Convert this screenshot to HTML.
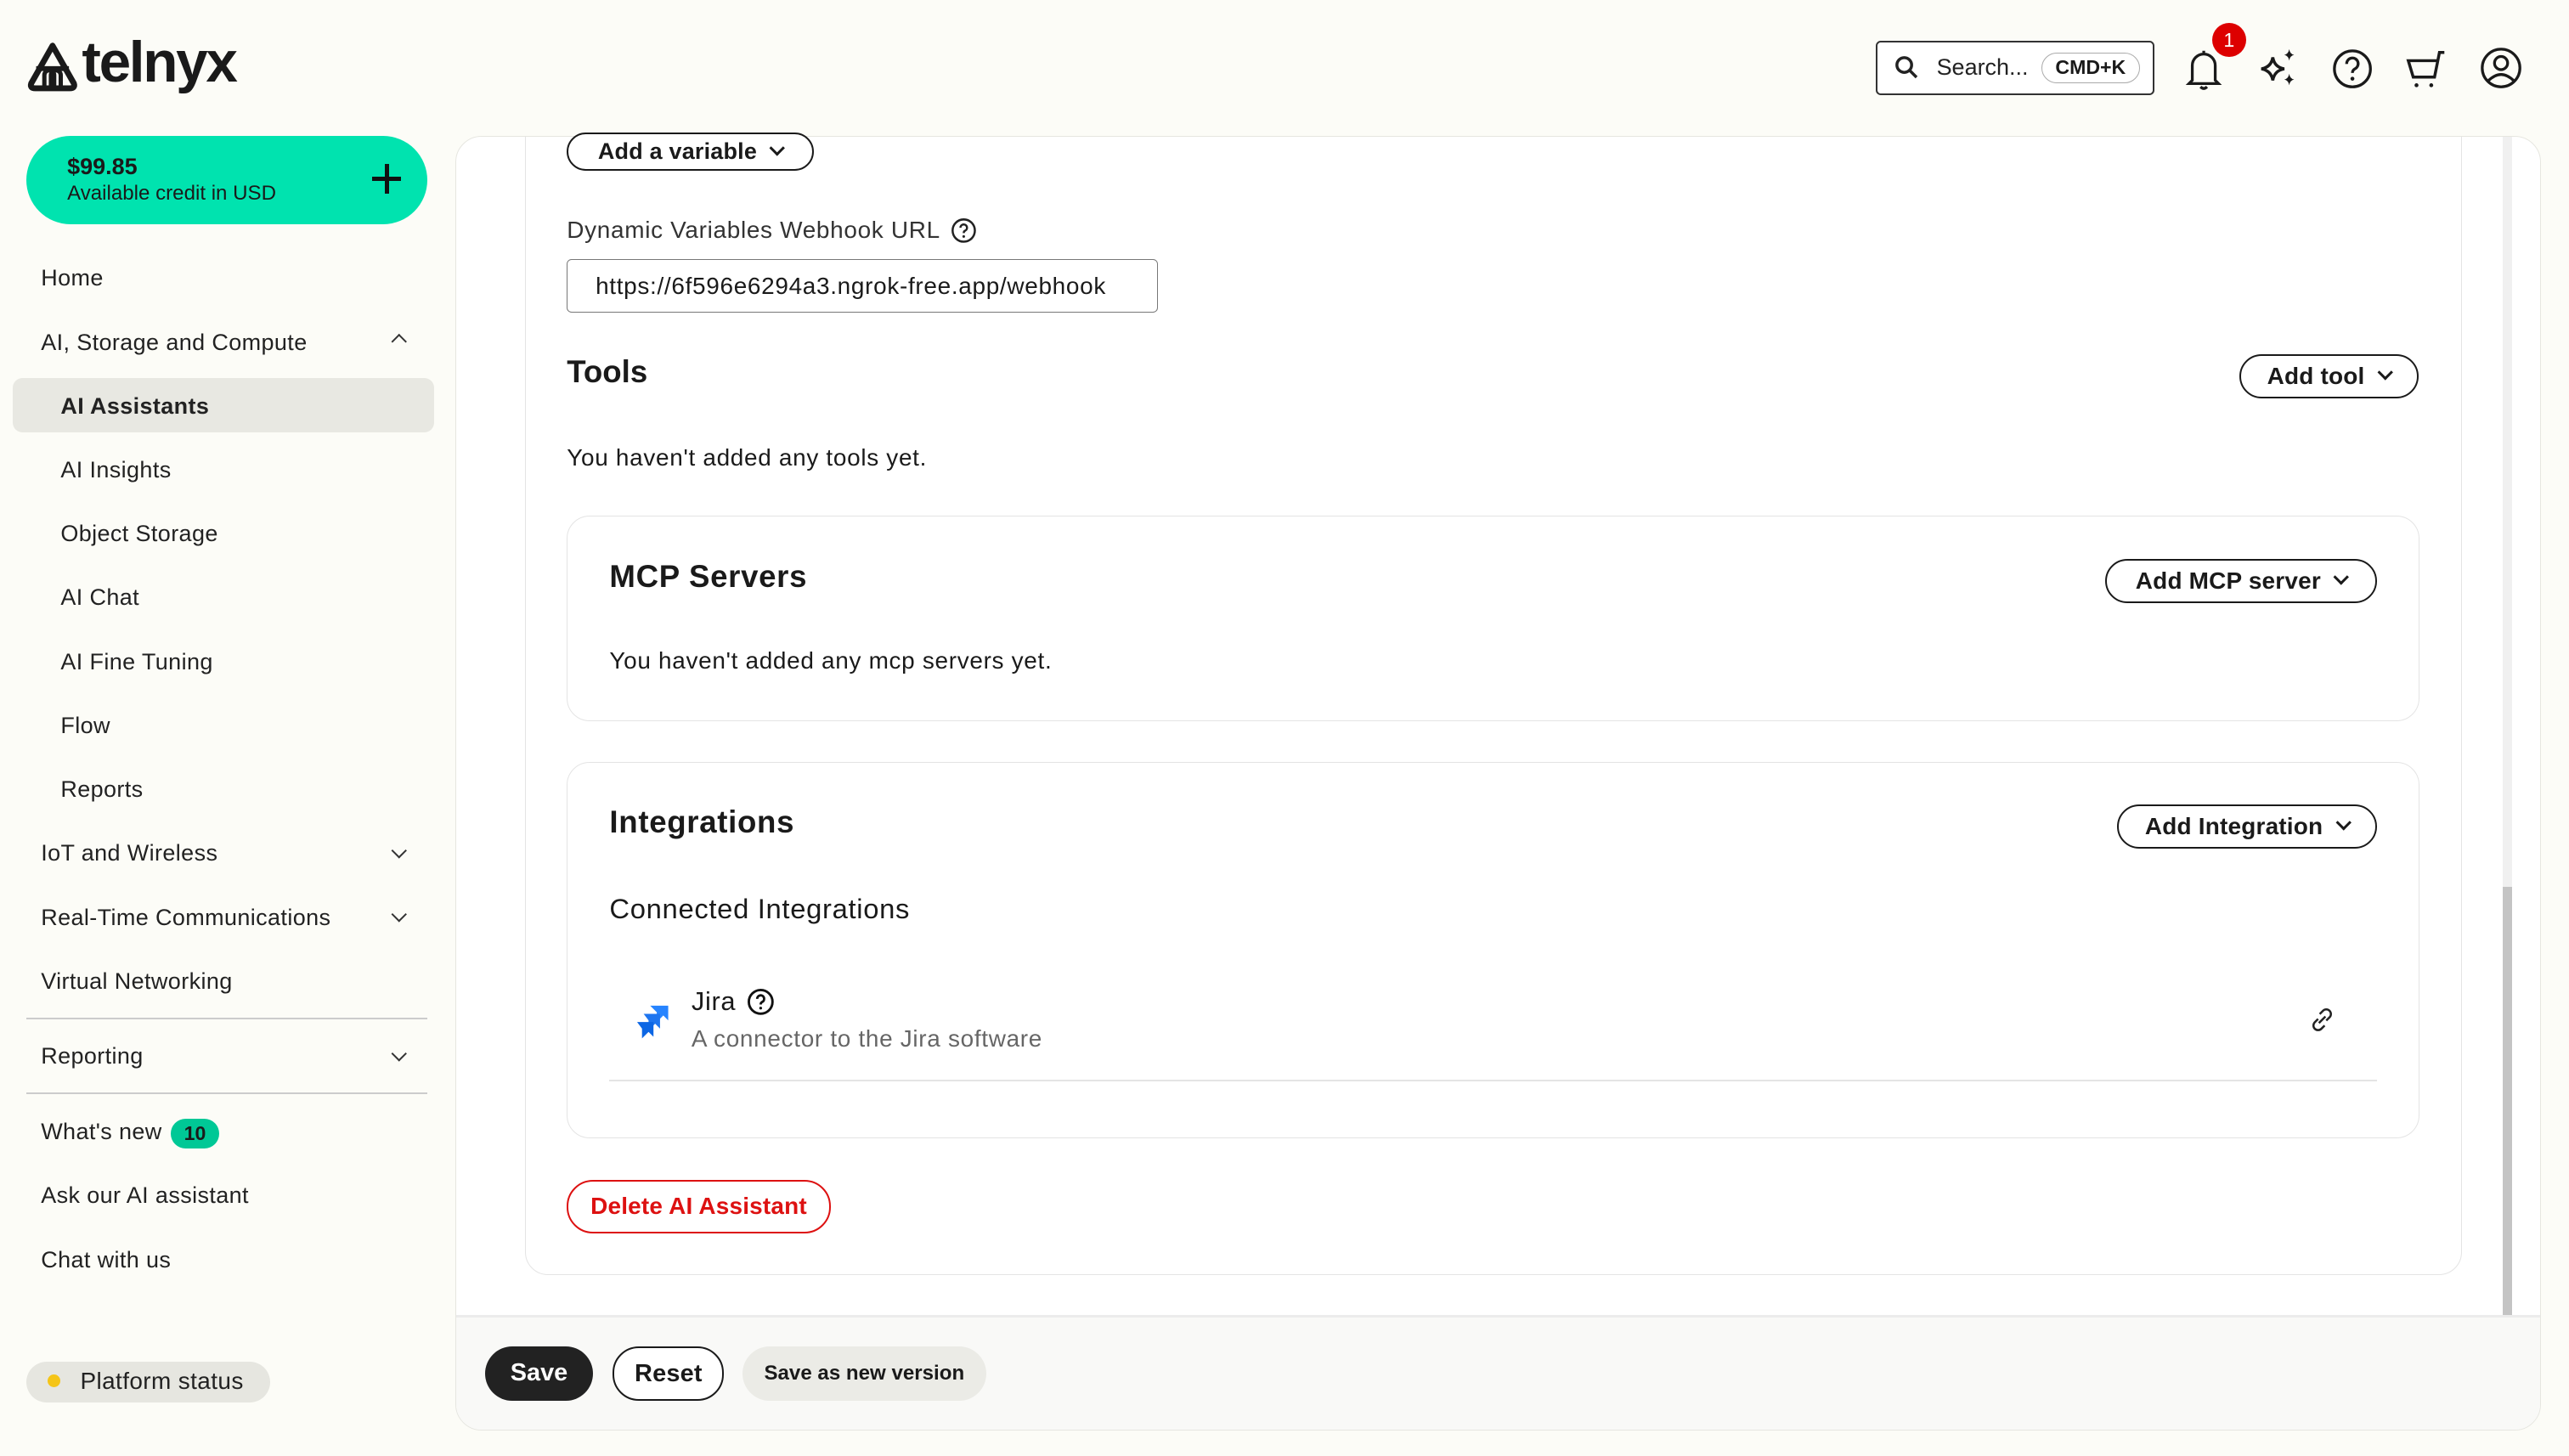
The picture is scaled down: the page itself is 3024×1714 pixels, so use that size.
<!DOCTYPE html>
<html><head><meta charset="utf-8"><style>
*{box-sizing:border-box;margin:0;padding:0}
html,body{width:3024px;height:1714px;overflow:hidden;background:#fcfcf7}
#z{zoom:1.92857;width:1568px;height:889px;position:relative;font-family:"Liberation Sans",sans-serif;color:#1a1a1a}
.a{position:absolute}
.t{letter-spacing:0.35px}
.nav{position:absolute;font-size:14px;color:#222;letter-spacing:0.2px}
.pill{position:absolute;border:1.5px solid #1a1a1a;border-radius:16px;font-weight:bold;font-size:14.5px;display:flex;align-items:center;justify-content:center;gap:9px;background:#fff;letter-spacing:0.1px}
.chev{width:7px;height:7px;border-right:2px solid #1a1a1a;border-bottom:2px solid #1a1a1a;transform:rotate(45deg);margin-top:-4px}
.navchev{position:absolute;width:7px;height:7px;border-right:1.5px solid #333;border-bottom:1.5px solid #333}
</style></head><body><div id="z">
<svg class="a" style="left:16px;top:25px" width="32" height="32" viewBox="0 0 32 32"><path d="M16 3 L29 26 Q30 29 26.5 29 L5.5 29 Q2 29 3 26 Z" fill="none" stroke="#1a1a1a" stroke-width="3.6" stroke-linejoin="round"/><path d="M6 17h20" stroke="#1a1a1a" stroke-width="3"/><path d="M11 29v-8a3 3 0 0 1 6 0v8 M15 29v-8a3 3 0 0 1 6 0v8" stroke="#1a1a1a" stroke-width="2.6" fill="none"/></svg>
<div class="a" style="left:50px;top:18px;font-size:35px;font-weight:bold;letter-spacing:-1.2px;color:#1a1a1a">telnyx</div>
<div class="a" style="left:16px;top:83px;width:245px;height:54px;border-radius:27px;background:#00e3af"></div>
<div class="a" style="left:41px;top:94px;font-size:14px;font-weight:bold">$99.85</div>
<div class="a" style="left:41px;top:111px;font-size:12.5px">Available credit in USD</div>
<div class="a" style="left:227px;top:108px;width:18px;height:2.5px;background:#111"></div>
<div class="a" style="left:235px;top:100px;width:2.5px;height:18px;background:#111"></div>
<div class="a" style="left:8px;top:231px;width:257px;height:33px;border-radius:6px;background:#e8e8e2"></div>
<div class="nav" style="left:25px;top:162px">Home</div>
<div class="nav" style="left:25px;top:201px">AI, Storage and Compute</div>
<div class="navchev" style="left:240px;top:205px;transform:rotate(-135deg)"></div>
<div class="nav" style="left:37px;top:240px;font-weight:bold">AI Assistants</div>
<div class="nav" style="left:37px;top:279px">AI Insights</div>
<div class="nav" style="left:37px;top:318px">Object Storage</div>
<div class="nav" style="left:37px;top:357px">AI Chat</div>
<div class="nav" style="left:37px;top:396px">AI Fine Tuning</div>
<div class="nav" style="left:37px;top:435px">Flow</div>
<div class="nav" style="left:37px;top:474px">Reports</div>
<div class="nav" style="left:25px;top:513px">IoT and Wireless</div>
<div class="navchev" style="left:240px;top:516px;transform:rotate(45deg)"></div>
<div class="nav" style="left:25px;top:552px">Real-Time Communications</div>
<div class="navchev" style="left:240px;top:555px;transform:rotate(45deg)"></div>
<div class="nav" style="left:25px;top:591px">Virtual Networking</div>
<div class="a" style="left:16px;top:621px;width:245px;height:1px;background:#ccc"></div>
<div class="nav" style="left:25px;top:637px">Reporting</div>
<div class="navchev" style="left:240px;top:640px;transform:rotate(45deg)"></div>
<div class="a" style="left:16px;top:667px;width:245px;height:1px;background:#ccc"></div>
<div class="nav" style="left:25px;top:683px">What's new</div>
<div class="a" style="left:104px;top:683px;width:30px;height:18px;border-radius:9px;background:#00c896;font-size:12px;font-weight:bold;text-align:center;line-height:18px">10</div>
<div class="nav" style="left:25px;top:722px">Ask our AI assistant</div>
<div class="nav" style="left:25px;top:761px">Chat with us</div>
<div class="a" style="left:16px;top:831px;width:149px;height:25px;border-radius:13px;background:#e6e6e0"></div>
<div class="a" style="left:29px;top:839px;width:8px;height:8px;border-radius:50%;background:#f5c518"></div>
<div class="nav" style="left:49px;top:835px;font-size:14.5px">Platform status</div>
<div class="a" style="left:1145px;top:25px;width:170px;height:33px;border:1.5px solid #333;border-radius:3px;background:#fff"></div>
<svg class="a" style="left:1156px;top:33px" width="16" height="16" viewBox="0 0 16 16"><circle cx="6.5" cy="6.5" r="4.5" fill="none" stroke="#222" stroke-width="1.8"/><path d="M10 10l4 4" stroke="#222" stroke-width="1.8"/></svg>
<div class="a" style="left:1182px;top:33px;font-size:14px;color:#222">Search...</div>
<div class="a" style="left:1246px;top:32px;width:60px;height:19px;border:1px solid #aaa;border-radius:10px;font-size:12px;font-weight:bold;text-align:center;line-height:17px">CMD+K</div>
<svg class="a" style="left:1332px;top:28px" width="26" height="28" viewBox="0 0 26 28"><path d="M6 21V12a7 7 0 0 1 14 0v9l2 2H4z M13 3v2 M11 25q2 2 4 0" fill="none" stroke="#1a1a1a" stroke-width="1.7"/></svg>
<div class="a" style="left:1350px;top:14px;width:21px;height:21px;border-radius:50%;background:#d00;color:#fff;font-size:12px;text-align:center;line-height:21px">1</div>
<svg class="a" style="left:1378px;top:29px" width="24" height="26" viewBox="0 0 24 26"><path d="M9 6 Q10 12 16 13 Q10 14 9 20 Q8 14 2 13 Q8 12 9 6Z" fill="none" stroke="#1a1a1a" stroke-width="1.8"/><path d="M19 1q.5 3 3 3.5q-2.5.5-3 3.5q-.5-3-3-3.5q2.5-.5 3-3.5Z M19 16q.5 3 3 3.5q-2.5.5-3 3.5q-.5-3-3-3.5q2.5-.5 3-3.5Z" fill="#1a1a1a"/></svg>
<svg class="a" style="left:1423px;top:29px" width="26" height="26" viewBox="0 0 26 26"><circle cx="13" cy="13" r="11" fill="none" stroke="#1a1a1a" stroke-width="1.7"/><path d="M9.5 10a3.5 3.5 0 1 1 5 3c-1 .6-1.5 1.2-1.5 2.5" fill="none" stroke="#1a1a1a" stroke-width="1.7"/><circle cx="13" cy="19" r="1.2" fill="#1a1a1a"/></svg>
<svg class="a" style="left:1468px;top:29px" width="26" height="26" viewBox="0 0 26 26"><path d="M2 8h18l-2 10H5z M20 8l1-5h3" fill="none" stroke="#1a1a1a" stroke-width="1.8"/><circle cx="7" cy="23" r="1.2" fill="#1a1a1a"/><circle cx="16" cy="23" r="1.2" fill="#1a1a1a"/></svg>
<svg class="a" style="left:1513px;top:28px" width="27" height="27" viewBox="0 0 27 27"><circle cx="13.5" cy="13.5" r="11.5" fill="none" stroke="#1a1a1a" stroke-width="1.7"/><circle cx="13.5" cy="10.5" r="4" fill="none" stroke="#1a1a1a" stroke-width="1.7"/><path d="M5.5 21.5q8-8 16 0" fill="none" stroke="#1a1a1a" stroke-width="1.7"/></svg>
<div class="a" style="left:278px;top:83px;width:1273px;height:790px;background:#fff;border:1px solid #e6e6e0;border-radius:16px;overflow:hidden">
  <div class="a" style="left:42px;top:-20px;width:1182px;height:715px;border:1px solid #e4e4e4;border-radius:14px"></div>
  <div class="a" style="left:1249px;top:0;width:6px;height:720px;background:#f0f0f0"></div>
  <div class="a" style="left:1249px;top:458px;width:6px;height:262px;background:#c4c4c4"></div>
  <div class="a" style="left:0;top:719px;width:1273px;height:71px;background:#f9f9f7;border-top:2px solid #ececec"></div>
</div>
<div class="pill" style="left:346px;top:81px;width:151px;height:23px;font-size:14px">Add a variable <span class="chev"></span></div>
<div class="a t" style="left:346px;top:132px;font-size:14.5px;color:#333">Dynamic Variables Webhook URL</div>
<svg class="a" style="left:580px;top:133px" width="16" height="16" viewBox="0 0 16 16"><circle cx="8" cy="8" r="6.8" fill="none" stroke="#222" stroke-width="1.3"/><path d="M6 6.3a2 2 0 1 1 2.8 1.8c-.6.3-.8.7-.8 1.4" fill="none" stroke="#222" stroke-width="1.3"/><circle cx="8" cy="11.6" r=".8" fill="#222"/></svg>
<div class="a t" style="left:346px;top:158px;width:361px;height:33px;border:1px solid #777;border-radius:3px;font-size:14.5px;padding:8px 0 0 17px;overflow:hidden;white-space:nowrap;color:#1a1a1a">https://6f596e6294a3.ngrok-free.app/webhook</div>
<div class="a" style="left:346px;top:216px;font-size:19px;font-weight:bold">Tools</div>
<div class="pill" style="left:1367px;top:216px;width:109px;height:27px">Add tool <span class="chev"></span></div>
<div class="a t" style="left:346px;top:271px;font-size:14.5px">You haven't added any tools yet.</div>
<div class="a" style="left:346px;top:315px;width:1131px;height:125px;border:1px solid #e4e4e4;border-radius:14px"></div>
<div class="a t" style="left:372px;top:341px;font-size:19px;font-weight:bold">MCP Servers</div>
<div class="pill" style="left:1285px;top:341px;width:166px;height:27px">Add MCP server <span class="chev"></span></div>
<div class="a t" style="left:372px;top:395px;font-size:14.5px">You haven't added any mcp servers yet.</div>
<div class="a" style="left:346px;top:465px;width:1131px;height:230px;border:1px solid #e4e4e4;border-radius:14px"></div>
<div class="a t" style="left:372px;top:491px;font-size:19px;font-weight:bold">Integrations</div>
<div class="pill" style="left:1292px;top:491px;width:159px;height:27px">Add Integration <span class="chev"></span></div>
<div class="a t" style="left:372px;top:545px;font-size:17px">Connected Integrations</div>
<svg class="a" style="left:388px;top:612px" width="22" height="22" viewBox="0 0 22 22"><path d="M9 2h11v9l-3-3-4 4V6z" fill="#2684ff"/><path d="M5 7h10v9l-3-3-4 4v-6z" fill="#1e75ef"/><path d="M1 12h10v9l-3-3-4 4v-6z" fill="#0c66e4"/></svg>
<div class="a t" style="left:422px;top:602px;font-size:16px">Jira</div>
<svg class="a" style="left:456px;top:603px" width="17" height="17" viewBox="0 0 16 16"><circle cx="8" cy="8" r="6.8" fill="none" stroke="#111" stroke-width="1.4"/><path d="M6 6.3a2 2 0 1 1 2.8 1.8c-.6.3-.8.7-.8 1.4" fill="none" stroke="#111" stroke-width="1.4"/><circle cx="8" cy="11.6" r=".8" fill="#111"/></svg>
<div class="a t" style="left:422px;top:626px;font-size:14.5px;color:#666">A connector to the Jira software</div>
<svg class="a" style="left:1410px;top:615px" width="15" height="15" viewBox="0 0 15 15"><path d="M6 4l2-2a2.5 2.5 0 0 1 4 4l-2 2M9 11l-2 2a2.5 2.5 0 0 1-4-4l2-2M5.5 9.5l4-4" fill="none" stroke="#222" stroke-width="1.3"/></svg>
<div class="a" style="left:372px;top:659px;width:1079px;height:1px;background:#e4e4e4"></div>
<div class="pill" style="left:346px;top:720px;width:161px;height:33px;border-color:#d11;color:#d11">Delete AI Assistant</div>
<div class="a" style="left:296px;top:822px;width:66px;height:33px;border-radius:17px;background:#222;color:#fff;font-size:15px;font-weight:bold;text-align:center;line-height:33px">Save</div>
<div class="pill" style="left:374px;top:822px;width:68px;height:33px;font-size:15px">Reset</div>
<div class="a" style="left:453px;top:822px;width:149px;height:33px;border-radius:17px;background:#ebebe6;font-size:12.5px;font-weight:bold;text-align:center;line-height:33px">Save as new version</div>
</div></body></html>
